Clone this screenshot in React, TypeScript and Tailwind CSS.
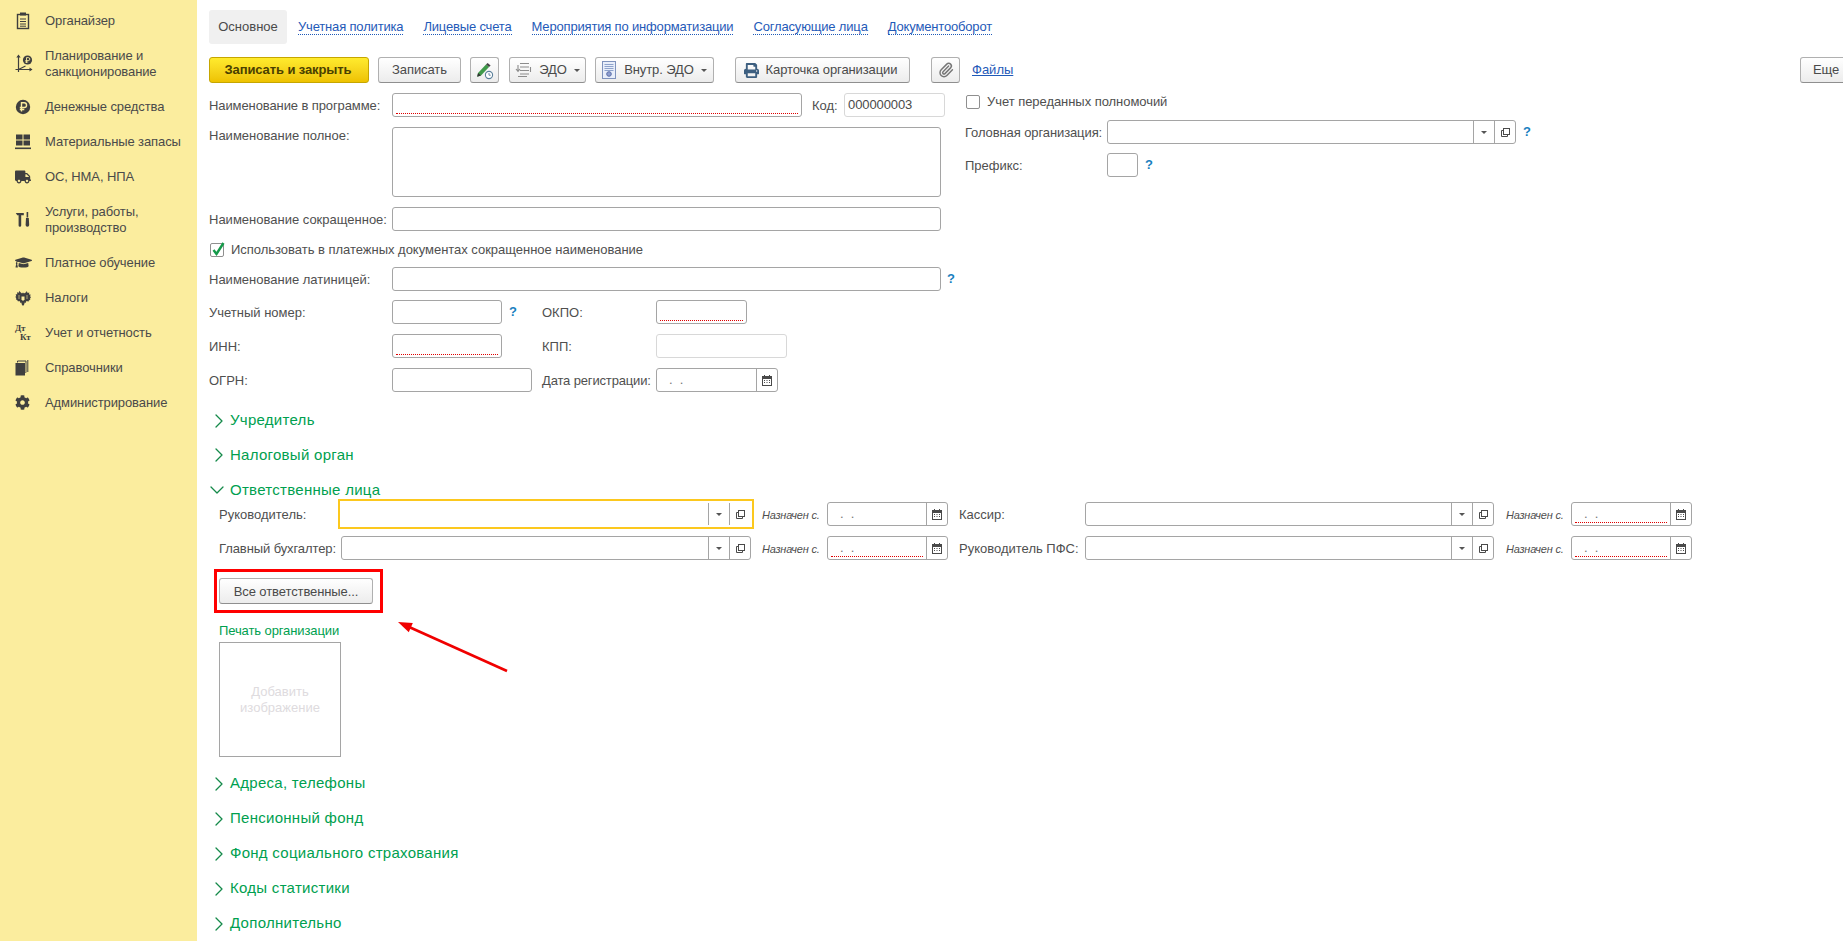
import type { ReactNode } from 'react'
import { FaCog, FaGraduationCap, FaPrint, FaTruck } from 'react-icons/fa'
import { ChevronDown, ChevronRight, Paperclip } from 'lucide-react'

const ic = '#3f3f3f'

function IconClipboard() {
  return (
    <svg width="16" height="18" viewBox="0 0 16 18" fill="none" stroke={ic}>
      <rect x="2.5" y="2.5" width="11" height="14" strokeWidth="1.4" />
      <rect x="5" y="0.5" width="6" height="3" fill={ic} stroke="none" />
      <path d="M5 7h6M5 9.5h6M5 12h6M5 14.2h6" strokeWidth="1" />
    </svg>
  )
}

function IconPlan() {
  return (
    <svg width="18" height="20" viewBox="0 0 18 20" fill="none" stroke={ic}>
      <path d="M3.5 2v16M0.5 15.5h16.5M3.5 15.5l7-3.5" strokeWidth="1.2" />
      <path d="M3.5 0.5l2.2 3h-4.4zM17.5 15.5l-3-2v4z" fill={ic} stroke="none" />
      <circle cx="12.5" cy="6" r="4.6" fill={ic} stroke="none" />
      <path d="M11.5 9V3.6h1.8a1.5 1.5 0 010 3h-3M10.2 8h3" stroke="#fbed9e" strokeWidth="0.9" />
    </svg>
  )
}

function IconCoin() {
  return (
    <svg width="16" height="16" viewBox="0 0 16 16" fill="none">
      <circle cx="8" cy="8" r="7.2" fill={ic} />
      <path d="M6.5 12.5V3.8h2.7a2.3 2.3 0 010 4.7H4.8M4.8 10.5h4.5" stroke="#fbed9e" strokeWidth="1.4" />
    </svg>
  )
}

function IconStock() {
  return (
    <svg width="16" height="16" viewBox="0 0 16 16" fill={ic}>
      <rect x="1" y="0.5" width="6.5" height="5" />
      <rect x="8.5" y="0.5" width="6.5" height="5" />
      <rect x="1" y="6.5" width="6.5" height="5" />
      <rect x="8.5" y="6.5" width="6.5" height="5" />
      <rect x="0" y="13.5" width="16" height="1.6" />
    </svg>
  )
}

function IconTools() {
  return (
    <svg width="16" height="15" viewBox="0 0 16 15" fill={ic}>
      <path d="M0.8 1h8v2.2H6.2v10.3a1.3 1.3 0 01-2.6 0V3.2H2.2z" />
      <path d="M11.6 0h1.6v5.5h-1.6zM11 6h2.8l.4 7a1.8 1.8 0 01-3.6 0z" />
    </svg>
  )
}

function IconEagle() {
  return (
    <svg width="16" height="16" viewBox="0 0 16 16" fill={ic}>
      <path d="M7 3.5L5.2 2 4.6 0.8 3.6 2.8 2 2.2l.3 2L0.7 4.2l.5 2L0.3 6.8l1 1.7-.4.8 1.7 1.2.4 1L4 11l1 .6.3 1.4 1-.6L7 15l1 .8 1-.8.7-2.6 1 .6.3-1.4 1-.6 1.3.7.4-1 1.7-1.2-.4-.8 1-1.7-.9-.6.5-2-1.6 0 .3-2-1.6.6-1-2-.6 1.2L9 3.5 8 2.5z" />
      <path d="M6.5 6.5h3v3L8 11 6.5 9.5z" fill="#fbed9e" />
      <path d="M4 5v4M12 5v4" stroke="#fbed9e" strokeWidth="0.6" />
    </svg>
  )
}

function IconDtKt() {
  return (
    <span className="flex w-4 flex-col font-['Liberation_Serif',serif] text-[9px] leading-[9px] font-bold text-[#3f3f3f]">
      <span>Дт</span>
      <span className="pl-[5px]">Кт</span>
    </span>
  )
}

function IconBooks() {
  return (
    <svg width="14" height="16" viewBox="0 0 14 16" fill="none" stroke={ic}>
      <rect x="0.5" y="3" width="9.5" height="12.5" fill={ic} stroke="none" />
      <path d="M2.5 2.5V1h8.5v11.5H10.5M12.8 0v12" strokeWidth="1" />
    </svg>
  )
}

const menu: { icon: ReactNode; lines: string[] }[] = [
  { icon: <IconClipboard />, lines: ['Органайзер'] },
  { icon: <IconPlan />, lines: ['Планирование и', 'санкционирование'] },
  { icon: <IconCoin />, lines: ['Денежные средства'] },
  { icon: <IconStock />, lines: ['Материальные запасы'] },
  { icon: <FaTruck size={16} color={ic} />, lines: ['ОС, НМА, НПА'] },
  { icon: <IconTools />, lines: ['Услуги, работы,', 'производство'] },
  { icon: <FaGraduationCap size={17} color={ic} />, lines: ['Платное обучение'] },
  { icon: <IconEagle />, lines: ['Налоги'] },
  { icon: <IconDtKt />, lines: ['Учет и отчетность'] },
  { icon: <IconBooks />, lines: ['Справочники'] },
  { icon: <FaCog size={15} color={ic} />, lines: ['Администрирование'] },
]

function Sidebar() {
  return (
    <aside className="h-full w-[197px] flex-shrink-0 bg-[#fbed9e] pt-[3px] tracking-[-0.1px] text-[#4a4a4a]">
      {menu.map(item => (
        <div
          key={item.lines[0]}
          className={`flex items-center pl-[15px] ${item.lines.length > 1 ? 'h-[51px]' : 'h-[35px]'}`}
        >
          <span className="flex w-[30px] flex-shrink-0 items-center">{item.icon}</span>
          <span className="leading-4">
            {item.lines.map(line => (
              <span key={line} className="block">{line}</span>
            ))}
          </span>
        </div>
      ))}
    </aside>
  )
}

function Btn({ className = '', children }: { className?: string; children?: ReactNode }) {
  return (
    <div
      className={`flex h-[26px] flex-shrink-0 items-center justify-center rounded-[3px] border border-[#b0b0b0] border-b-[#8f8f8f] bg-gradient-to-b from-white to-[#ececec] tracking-[-0.1px] text-[#4a4a4a] ${className}`}
    >
      {children}
    </div>
  )
}

function Caret() {
  return <span className="ml-[7px] h-0 w-0 border-x-[3px] border-t-[3px] border-x-transparent border-t-[#555]" />
}

function PencilClockIcon() {
  return (
    <svg width="19" height="19" viewBox="0 0 19 19" fill="none">
      <path d="M3 12L11 3.5l3 2.5-8 8.5-3.8 1.2z" fill="#3f9a4a" />
      <path d="M11 3.5l1.6-1.6 3 2.5L14 6z" fill="#444" />
      <path d="M2.2 15.7L3 12l3 2.5z" fill="#333" />
      <circle cx="14" cy="14" r="3.6" fill="#fff" stroke="#5a7f9a" strokeWidth="1.1" />
      <path d="M14 12v2.2h1.7" stroke="#5a7f9a" strokeWidth="0.9" />
    </svg>
  )
}

function EdoIcon() {
  return (
    <svg width="18" height="16" viewBox="0 0 18 16" fill="none" stroke="#8c8c8c" strokeWidth="1.1">
      <path d="M5 1.5h9M5 5h9M5 8.5h9M5 12h9M3 14.5h9" />
      <path d="M3 3v6M1 7l2 2.4L5 7M15.5 5v5" />
    </svg>
  )
}

function DocIcon() {
  return (
    <svg width="14" height="18" viewBox="0 0 14 18" fill="none">
      <rect x="0.5" y="0.5" width="13" height="17" fill="#e8eefa" stroke="#7f93bd" />
      <path d="M2.5 3.5h9M2.5 5.5h9M2.5 7.5h9M2.5 9.5h9" stroke="#8ea3cc" />
      <circle cx="7" cy="13" r="2.3" fill="#8f9fd0" stroke="#5b6ea8" />
    </svg>
  )
}

function Toolbar() {
  return (
    <div className="mt-[13px] flex h-[26px] items-center">
      <div className="flex h-[26px] w-[160px] flex-shrink-0 items-center justify-center rounded-[3px] border border-[#c6a600] bg-gradient-to-b from-[#ffeb2d] to-[#eec200] pr-[2px] font-bold tracking-[-0.1px] text-[#4a4000]">
        Записать и закрыть
      </div>
      <Btn className="ml-[9px] w-[83px]">Записать</Btn>
      <Btn className="ml-[9px] w-[29px]"><PencilClockIcon /></Btn>
      <Btn className="ml-[10px] w-[77px]">
        <EdoIcon />
        <span className="ml-[6px]">ЭДО</span>
        <Caret />
      </Btn>
      <Btn className="ml-[9px] w-[119px]">
        <DocIcon />
        <span className="ml-[8px]">Внутр. ЭДО</span>
        <Caret />
      </Btn>
      <Btn className="ml-[21px] w-[175px] pr-[4px]">
        <FaPrint size={15} color="#3d5f80" />
        <span className="ml-[7px]">Карточка организации</span>
      </Btn>
      <Btn className="ml-[21px] w-[29px]"><Paperclip size={16} color="#777" strokeWidth={2.2} /></Btn>
      <a className="ml-3 text-[#1f5ab8] underline">Файлы</a>
      <Btn className="mr-[-8px] ml-auto w-[51px] justify-start pl-[12px]">Еще</Btn>
    </div>
  )
}

function Tabs() {
  const links = ['Учетная политика', 'Лицевые счета', 'Мероприятия по информатизации', 'Согласующие лица', 'Документооборот']
  return (
    <div className="mt-[10px] flex h-[34px] items-center">
      <div className="flex h-full w-[78px] items-center justify-center rounded-[3px] bg-[#f0f0f0] text-[#4a4a4a]">Основное</div>
      <div className="ml-[11px] flex gap-5">
        {links.map(l => (
          <a key={l} className="border-b border-dotted border-[#1f5ab8] leading-[15px] tracking-[-0.17px] text-[#1f5ab8]">{l}</a>
        ))}
      </div>
    </div>
  )
}

function RedLine() {
  return <div className="w-full border-b border-dotted border-[#e00000]" />
}

function Input({ className = '', red, text, light }: { className?: string; red?: boolean; text?: string; light?: boolean }) {
  return (
    <div
      className={`relative flex h-6 flex-shrink-0 items-end rounded-[3px] border bg-white px-[3px] pb-[2px] ${light ? 'border-[#d8d8d8]' : 'border-[#a5a5a5]'} ${className}`}
    >
      {text && <span className="absolute top-[3px] left-[3px] leading-4 tracking-[-0.1px] text-[#4a4a4a]">{text}</span>}
      {red && <RedLine />}
    </div>
  )
}

function CalendarIcon() {
  return (
    <svg width="10" height="11" viewBox="0 0 10 11" fill="none">
      <rect x="0.5" y="1.5" width="9" height="9" fill="#fff" stroke="#4a4a4a" />
      <rect x="0.5" y="1.5" width="9" height="2.5" fill="#4a4a4a" />
      <path d="M2.5 0v2M7.5 0v2" stroke="#4a4a4a" />
      <path d="M2 5.5h1M4.5 5.5h1M7 5.5h1M2 7.5h1M4.5 7.5h1M7 7.5h1" stroke="#4a4a4a" />
    </svg>
  )
}

function DateInput({ className = '', red }: { className?: string; red?: boolean }) {
  return (
    <div className={`flex h-6 flex-shrink-0 rounded-[3px] border border-[#a5a5a5] bg-white ${className}`}>
      <div className="relative flex flex-1 items-end px-[3px] pb-[2px]">
        <span className="absolute top-[1px] left-[12px] text-[#777]">. &nbsp;.</span>
        {red && <RedLine />}
      </div>
      <div className="flex w-[21px] items-center justify-center border-l border-[#a5a5a5]"><CalendarIcon /></div>
    </div>
  )
}

function Label({ className = '', children }: { className?: string; children: ReactNode }) {
  return <span className={`flex-shrink-0 pt-[2px] text-[#4f4f4f] ${className}`}>{children}</span>
}

function Help({ className = '' }: { className?: string }) {
  return <span className={`font-bold text-[#1a7fc0] ${className}`}>?</span>
}

function Check({ checked }: { checked?: boolean }) {
  return (
    <span className="relative h-[14px] w-[14px] flex-shrink-0 rounded-[2px] border border-[#8f8f8f] bg-white">
      {checked && (
        <svg className="absolute -top-[3px] left-0" width="15" height="16" viewBox="0 0 15 16" fill="none">
          <path d="M2.5 9l3 4L12.5 2" stroke="#159a4a" strokeWidth="2.4" />
        </svg>
      )}
    </span>
  )
}

function Row({ className = '', children }: { className?: string; children: ReactNode }) {
  return <div className={`flex h-6 items-center ${className}`}>{children}</div>
}

function MainForm() {
  return (
    <div className="mt-[10px] flex">
      <div className="w-[756px] flex-shrink-0">
        <Row>
          <Label className="w-[183px] tracking-[-0.1px]">Наименование в программе:</Label>
          <Input className="w-[410px]" red />
          <Label className="ml-[10px] w-[32px]">Код:</Label>
          <Input className="w-[101px]" light text="000000003" />
        </Row>
        <div className="mt-[10px] flex">
          <Label className="-mt-[1px] w-[183px] leading-4">Наименование полное:</Label>
          <div className="h-[70px] w-[549px] rounded-[3px] border border-[#a5a5a5] bg-white" />
        </div>
        <Row className="mt-[10px]">
          <Label className="w-[183px]">Наименование сокращенное:</Label>
          <Input className="w-[549px]" />
        </Row>
        <div className="mt-[12px] flex h-[14px] items-center pl-[1px]">
          <Check checked />
          <Label className="-mt-[2px] ml-[7px] tracking-[-0.02px]">Использовать в платежных документах сокращенное наименование</Label>
        </div>
        <Row className="mt-[10px]">
          <Label className="w-[183px]">Наименование латиницей:</Label>
          <Input className="w-[549px]" />
          <Help className="ml-[6px]" />
        </Row>
        <Row className="mt-[9px]">
          <Label className="w-[183px]">Учетный номер:</Label>
          <Input className="w-[110px]" />
          <Help className="ml-[7px] w-[33px]" />
          <Label className="w-[114px]">ОКПО:</Label>
          <Input className="w-[91px]" red />
        </Row>
        <Row className="mt-[10px]">
          <Label className="w-[183px]">ИНН:</Label>
          <Input className="w-[110px]" red />
          <span className="w-[40px]" />
          <Label className="w-[114px]">КПП:</Label>
          <Input className="w-[131px]" light />
        </Row>
        <Row className="mt-[10px]">
          <Label className="w-[183px]">ОГРН:</Label>
          <Input className="w-[140px]" />
          <span className="w-[10px]" />
          <Label className="w-[114px] tracking-[-0.15px]">Дата регистрации:</Label>
          <DateInput className="w-[122px]" />
        </Row>
      </div>

      <div>
        <div className="mt-[2px] flex h-[14px] items-center pl-[1px]">
          <Check />
          <Label className="-mt-[2px] ml-[7px] tracking-[-0.05px]">Учет переданных полномочий</Label>
        </div>
        <Row className="mt-[11px]">
          <Label className="w-[142px] tracking-[-0.1px]">Головная организация:</Label>
          <RefInput className="w-[409px]" />
          <Help className="ml-[7px]" />
        </Row>
        <Row className="mt-[9px]">
          <Label className="w-[142px]">Префикс:</Label>
          <Input className="w-[31px]" />
          <Help className="ml-[7px]" />
        </Row>
      </div>
    </div>
  )
}

function OpenIcon() {
  return (
    <svg width="9" height="9" viewBox="0 0 9 9" fill="none" stroke="#4a4a4a">
      <rect x="2.5" y="0.5" width="6" height="6" fill="#fff" />
      <path d="M2 2.5H0.5v6h6V7" />
    </svg>
  )
}

function RefInput({ className = '', focused }: { className?: string; focused?: boolean }) {
  const base = focused
    ? 'border-transparent outline-2 outline-offset-[1px] outline-[#fcc81e] rounded-none'
    : 'border-[#a5a5a5] rounded-[3px]'
  return (
    <div className={`flex h-6 flex-shrink-0 border bg-white ${base} ${className}`}>
      <div className="flex-1" />
      <div className="flex w-[21px] items-center justify-center border-l border-[#a5a5a5]">
        <span className="h-0 w-0 border-x-[3px] border-t-[3px] border-x-transparent border-t-[#555]" />
      </div>
      <div className="flex w-[21px] items-center justify-center border-l border-[#a5a5a5]"><OpenIcon /></div>
    </div>
  )
}

function Assigned({ className = '' }: { className?: string }) {
  return <Label className={`text-[11px] tracking-[-0.2px] italic ${className}`}>Назначен с.</Label>
}

function Section({ title, open, className = '' }: { title: string; open?: boolean; className?: string }) {
  const Icon = open ? ChevronDown : ChevronRight
  return (
    <div className={`flex items-center text-[15px] tracking-[0.28px] text-[#00a04f] ${className}`}>
      <span className={`flex w-[21px] justify-center ${open ? 'pr-[5px]' : 'pr-[2px]'}`}>
        <Icon className="flex-shrink-0" size={24} color="#158a4a" strokeWidth={1.3} />
      </span>
      {title}
    </div>
  )
}

function Responsible() {
  return (
    <div className="pl-[10px]">
      <Row className="mt-[2px]">
        <Label className="w-[122px]">Руководитель:</Label>
        <RefInput className="w-[410px]" focused />
        <Assigned className="ml-[11px] w-[65px]" />
        <DateInput className="w-[121px]" />
        <Label className="ml-[11px] w-[126px]">Кассир:</Label>
        <RefInput className="w-[409px]" />
        <Assigned className="ml-[12px] w-[65px]" />
        <DateInput className="w-[121px]" red />
      </Row>
      <Row className="mt-[10px]">
        <Label className="w-[122px] tracking-[-0.1px]">Главный бухгалтер:</Label>
        <RefInput className="w-[410px]" />
        <Assigned className="ml-[11px] w-[65px]" />
        <DateInput className="w-[121px]" red />
        <Label className="ml-[11px] w-[126px]">Руководитель ПФС:</Label>
        <RefInput className="w-[409px]" />
        <Assigned className="ml-[12px] w-[65px]" />
        <DateInput className="w-[121px]" red />
      </Row>
      <div className="relative mt-[18px] w-[154px]">
        <Btn className="w-[154px] pt-[1px]">Все ответственные...</Btn>
        <div className="absolute -top-[9px] -right-[10px] -bottom-[9px] -left-[5px] border-[3px] border-[#ff0000]" />
      </div>
      <div className="mt-[18px] h-[16px] pt-[1px] leading-4 tracking-[-0.1px] text-[#00a04f]">Печать организации</div>
      <div className="mt-[4px] flex h-[115px] w-[122px] items-center justify-center border border-[#a5a5a5] text-center leading-4 text-[#dedbde]">
        Добавить<br />изображение
      </div>
    </div>
  )
}

export default function App() {
  return (
    <div className="relative flex h-[941px] w-[1843px] overflow-hidden bg-white font-['Liberation_Sans',Arial,sans-serif] text-[13px]">
      <Sidebar />
      <main className="min-w-0 flex-1 pl-[12px]">
        <Tabs />
        <Toolbar />
        <MainForm />
        <Section className="mt-[11px] h-[35px]" title="Учредитель" />
        <Section className="h-[34px]" title="Налоговый орган" />
        <Section className="mt-[8px] h-[20px]" title="Ответственные лица" open />
        <Responsible />
        <div className="mt-[9px]">
          {['Адреса, телефоны', 'Пенсионный фонд', 'Фонд социального страхования', 'Коды статистики', 'Дополнительно'].map(t => (
            <Section key={t} className="h-[35px]" title={t} />
          ))}
        </div>
      </main>
      <svg className="absolute top-[615px] left-[390px]" width="125" height="62" viewBox="0 0 125 62" fill="none">
        <path d="M117 56L18 11.5" stroke="#f00000" strokeWidth="2.6" />
        <path d="M8 7L22.8 8.1 18.8 17.3z" fill="#f00000" />
      </svg>
    </div>
  )
}
